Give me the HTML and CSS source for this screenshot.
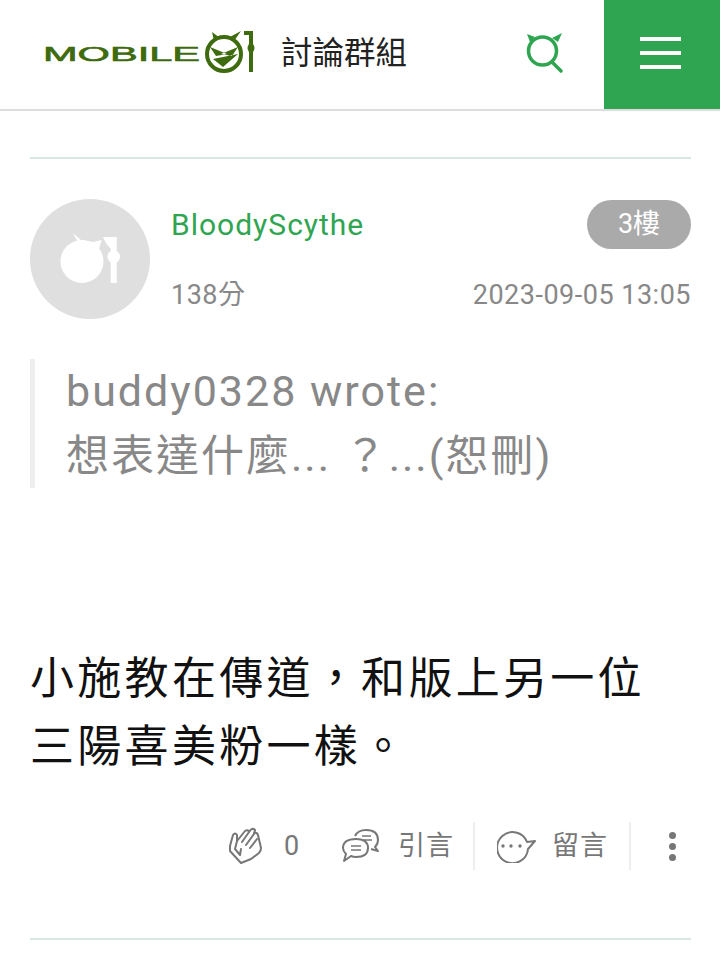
FILE: index.html
```html
<!DOCTYPE html>
<html lang="zh-TW">
<head>
    <meta charset="UTF-8">
    <meta name="viewport" content="width=device-width, initial-scale=1.0">
    <title>討論群組</title>
    <link rel="stylesheet" href="styles.css">
</head>
<body>

    <header class="top-bar">
        <svg class="logo" width="212" height="50" viewBox="0 0 212 50">
            <text x="-1" y="31" class="logo-text" textLength="157" lengthAdjust="spacingAndGlyphs">MOBILE</text>
            <circle cx="180" cy="24" r="17" fill="none" stroke="#3f6b0f" stroke-width="4"/>
            <path d="M168 2 L176 8 L170 11 Z M197 1 L190 11 L184 8 Z" fill="#3f6b0f"/>
            <path d="M166 17 L183 24 L172 26 Z M194 17 L177 24 L188 26 Z M169 29 L194 24 L179 37 Z" fill="#3f6b0f"/>
            <path d="M200 1 H209 V14 Q212 18 209 22 V42 H205 V22 Q202 18 205 14 V5 H200 Z" fill="#3f6b0f"/>
        </svg>
        <div class="site-title">討論群組</div>
        <svg class="search-icon" width="42" height="44" viewBox="0 0 42 44">
            <circle cx="17.5" cy="20" r="14" fill="none" stroke="#30a551" stroke-width="3.5"/>
            <path d="M27 31 L36 40" stroke="#30a551" stroke-width="3.5" stroke-linecap="round"/>
            <path d="M2 3 L10 6 L5 11 Z M37 2 L33 11 L27 7 Z" fill="#30a551"/>
        </svg>
        <div class="menu-btn">
            <span></span>
            <span></span>
            <span></span>
        </div>
    </header>

    <div class="container">
        <hr class="line">

        <section class="post">
            <div class="post-head">
                <div class="avatar">
                    <svg width="60" height="60" viewBox="0 0 60 60">
                        <circle cx="22" cy="32.5" r="21.5" fill="#fff"/>
                        <path d="M12.7 4 L21 11 L33 13 L41.7 11 L39 20 L22 20 Z" fill="#fff"/>
                        <path d="M43 8 H56.7 V54 H50.7 V20 L46 14 Z" fill="#fff"/>
                        <circle cx="53.7" cy="27.7" r="6.3" fill="#fff"/>
                    </svg>
                </div>
                <div class="post-info">
                    <div class="info-row">
                        <a class="user-name" href="#">BloodyScythe</a>
                        <span class="floor">3樓</span>
                    </div>
                    <div class="info-row">
                        <span class="meta">138分</span>
                        <span class="meta">2023-09-05 13:05</span>
                    </div>
                </div>
            </div>

            <blockquote class="quote">
                buddy0328 wrote:<br>
                想表達什麼... ？...(恕刪)
            </blockquote>

            <p class="post-text">小施教在傳道，和版上另一位<br>三陽喜美粉一樣。</p>

            <div class="actions">
                <div class="action action-like">
                    <svg width="34" height="38" viewBox="0 0 34 38" class="icon">
                        <path d="M13 36 L2 24 L2 19 L5 8 Q7 5 9 8 L9 14 L17 4 Q20 2 21 5 Q24 0 27 3 Q27 5 26 6 Q29 5 30 8 L33 21 Q33 24 31 26 L23 32 Z" fill="none" stroke="#777" stroke-width="2" stroke-linejoin="round"/>
                        <path d="M9 14 L7 22 L12 28 M14 15 L21 5 M18 18 L26 7 M22 21 L29 12 M12 28 L13 22" fill="none" stroke="#777" stroke-width="2" stroke-linecap="round"/>
                    </svg>
                    <span class="count">0</span>
                </div>
                <div class="action action-quote">
                    <svg width="38" height="34" viewBox="0 0 38 34" class="icon">
                        <path d="M13 7 Q16 1 24 1 Q36 1 36 11 Q36 15 33 18 L36 22 L29 20" fill="none" stroke="#777" stroke-width="2" stroke-linejoin="round"/>
                        <path d="M14 10 Q26 10 26 19 Q26 28 14 28 Q11 28 9 27 L2 32 L4 25 Q1 22 1 19 Q1 10 14 10 Z" fill="#fff" stroke="#777" stroke-width="2" stroke-linejoin="round"/>
                        <path d="M20 7 H29 M21 11 H30 M9 17 H19 M9 21 H19" stroke="#777" stroke-width="1.6"/>
                    </svg>
                    <span class="label">引言</span>
                </div>
                <div class="action action-reply">
                    <svg width="40" height="34" viewBox="0 0 40 34" class="icon">
                        <path d="M31 20 A15.5 15.5 0 1 1 30 13 L38 12 Z" fill="none" stroke="#777" stroke-width="2" stroke-linejoin="round"/>
                        <circle cx="6" cy="17" r="1.7" fill="#777"/>
                        <circle cx="14" cy="17" r="1.7" fill="#777"/>
                        <circle cx="23" cy="17" r="1.7" fill="#777"/>
                    </svg>
                    <span class="label">留言</span>
                </div>
                <div class="action action-more">
                    <i></i><i></i><i></i>
                </div>
            </div>
        </section>

        <hr class="line">
    </div>

</body>
</html>
```

FILE: styles.css
```css
body {
    margin: 0;
    font-family: Roboto, "Noto Sans CJK TC", sans-serif;
    background-color: #fff;
    color: #111;
    overflow: hidden;
}
a {
    text-decoration: none;
}
.top-bar {
    display: flex;
    align-items: center;
    height: 109px;
    border-bottom: 2px solid #ddd;
    padding-left: 44px;
}
.logo {
    flex: none;
    margin-top: 1px;
}
.logo-text {
    font-family: "Liberation Sans", sans-serif;
    font-size: 20px;
    fill: #3f6b0f;
    stroke: #3f6b0f;
    stroke-width: 0.6px;
}
.site-title {
    margin-left: 25px;
    padding-bottom: 10px;
    font-size: 31.5px;
    color: #222;
}
.search-icon {
    margin-left: auto;
    margin-right: 37px;
    margin-bottom: 4px;
}
.menu-btn {
    display: flex;
    flex-direction: column;
    justify-content: center;
    align-items: center;
    gap: 10px;
    box-sizing: border-box;
    width: 116px;
    height: 109px;
    padding: 0 3px 3px 0;
    background-color: #30a551;
}
.menu-btn span {
    width: 41px;
    height: 4px;
    background-color: #fff;
}
.container {
    padding: 46px 29px 0 30px;
}
.line {
    margin: 0;
    border: none;
    height: 2px;
    background-color: #d9e8e0;
}
.post {
    padding-top: 40px;
}
.post-head {
    display: flex;
    gap: 21px;
}
.avatar {
    display: flex;
    flex: none;
    align-items: center;
    justify-content: center;
    width: 120px;
    height: 120px;
    border-radius: 50%;
    background-color: #dfdfdf;
}
.post-info {
    flex: 1;
}
.info-row {
    display: flex;
    justify-content: space-between;
    align-items: center;
    height: 50px;
    margin-bottom: 20px;
}
.user-name {
    padding-top: 2px;
    font-size: 30px;
    line-height: 36px;
    letter-spacing: 1px;
    color: #30a551;
}
.floor {
    width: 104px;
    height: 49px;
    line-height: 49px;
    text-align: center;
    border-radius: 25px;
    background-color: #aaa;
    color: #fff;
    font-size: 27px;
}
.meta {
    padding-top: 2px;
    font-size: 27px;
    line-height: 30px;
    letter-spacing: 0.5px;
    color: #888;
}
.quote {
    margin: 20px 0 0;
    padding: 0 0 0 31px;
    border-left: 5px solid #eee;
    font-size: 43px;
    line-height: 64.5px;
    letter-spacing: 2px;
    color: #888;
}
.post-text {
    margin: 157px 0 0;
    font-size: 44px;
    line-height: 68px;
    letter-spacing: 3.3px;
    color: #111;
}
.actions {
    display: flex;
    justify-content: flex-end;
    align-items: center;
    height: 48px;
    margin-top: 41px;
    margin-bottom: 68px;
    color: #777;
}
.action {
    display: flex;
    align-items: center;
    height: 48px;
}
.action-like {
    width: 114px;
    gap: 22px;
}
.count,
.label {
    font-size: 27px;
    line-height: 32px;
    letter-spacing: 1px;
    color: #777;
}
.action-quote {
    gap: 18px;
    width: 131px;
    border-right: 2px solid #eee;
}
.action-reply {
    gap: 15px;
    width: 132px;
    padding-left: 22px;
    border-right: 2px solid #eee;
}
.action-more {
    flex-direction: column;
    justify-content: center;
    align-items: flex-start;
    gap: 4px;
    box-sizing: border-box;
    width: 60px;
    padding-left: 38px;
}
.action-more i {
    width: 7px;
    height: 7px;
    border-radius: 50%;
    background-color: #777;
}
```
